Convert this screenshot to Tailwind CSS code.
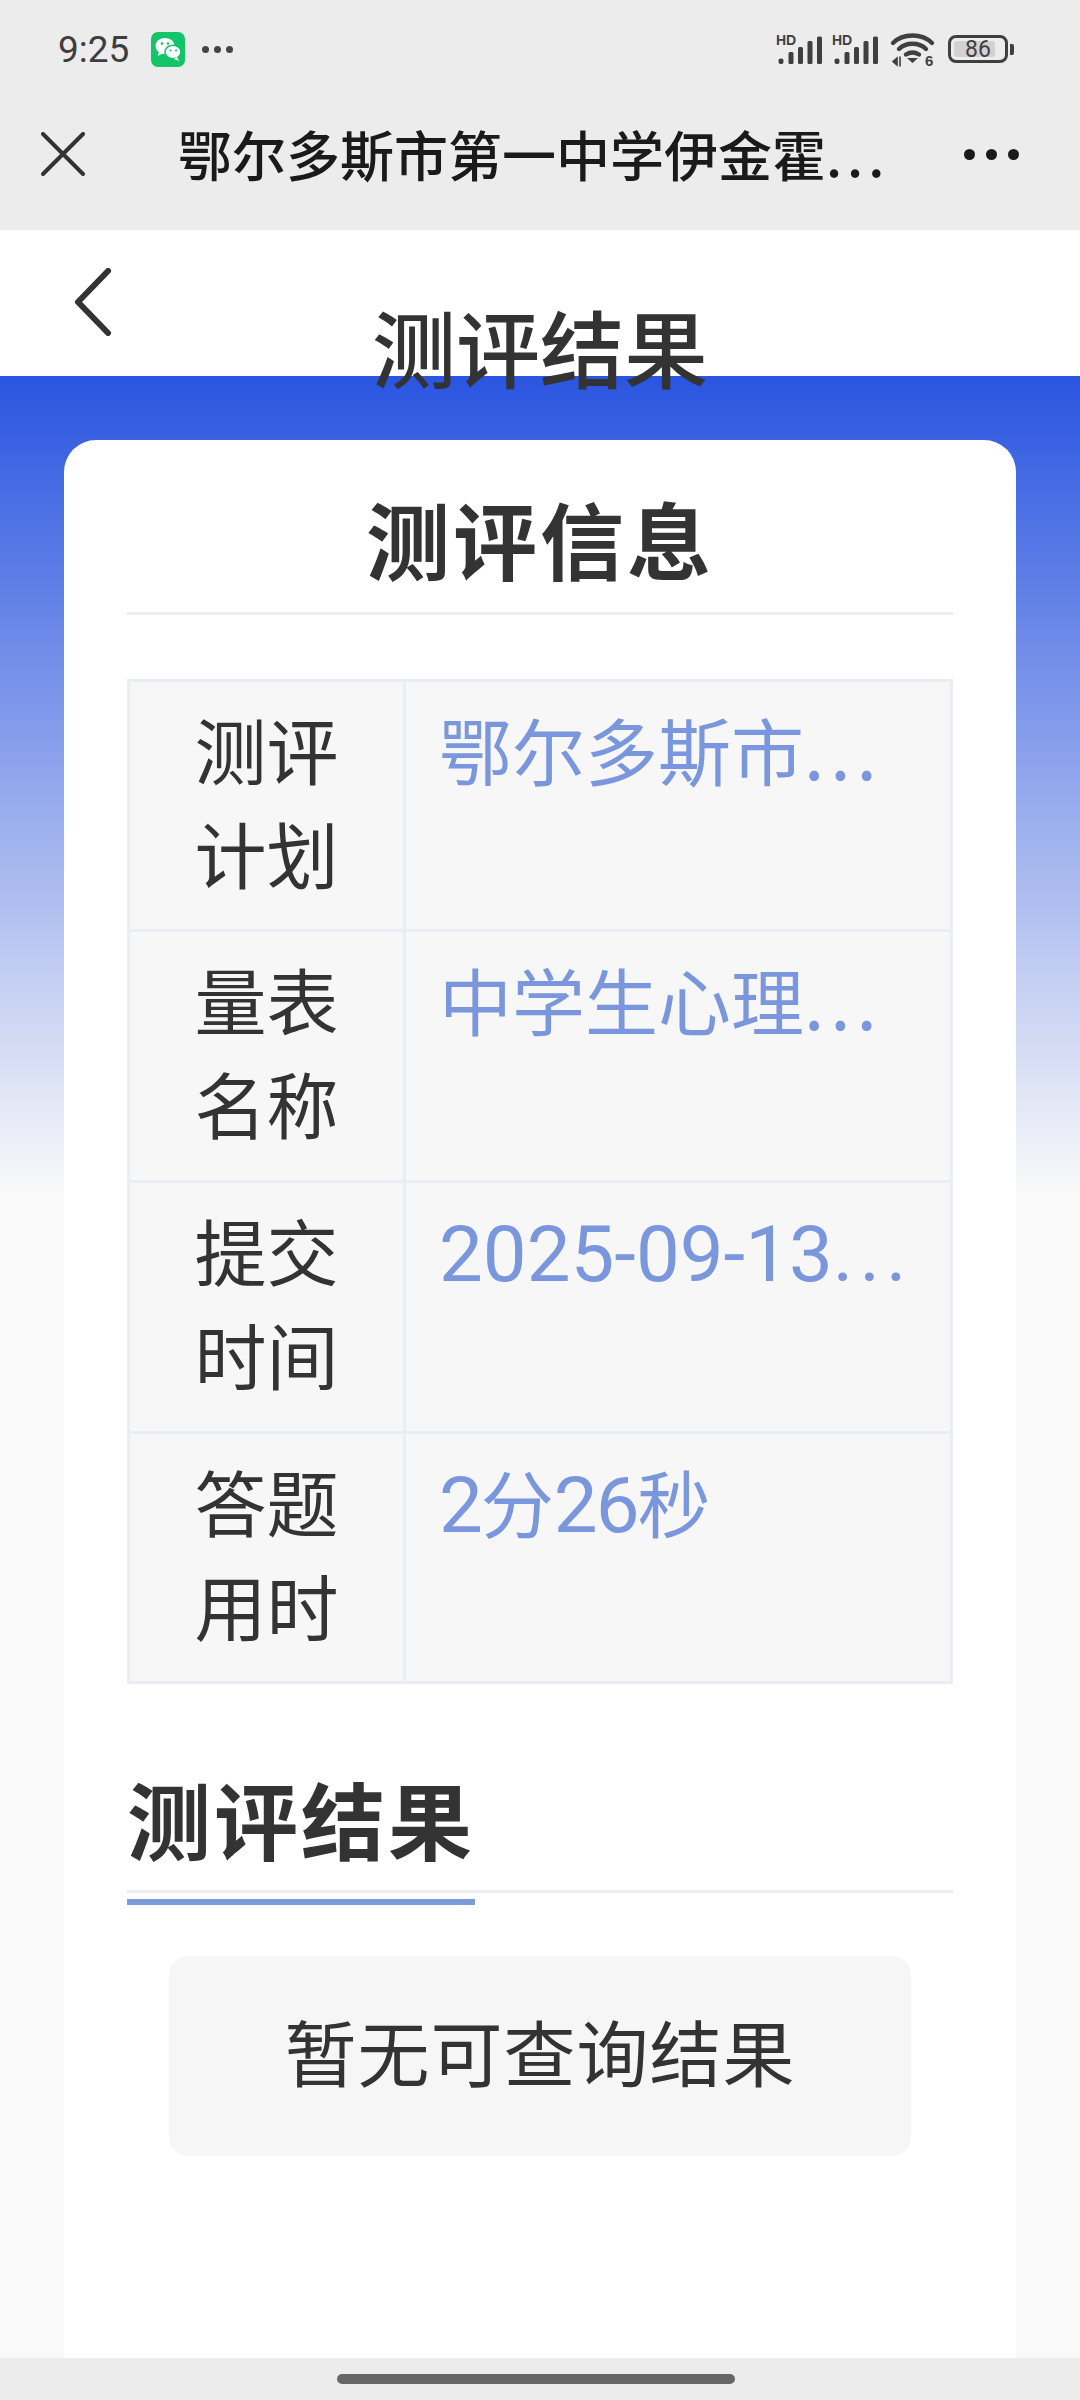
<!DOCTYPE html>
<html lang="zh-CN">
<head>
    <meta charset="UTF-8">
    <meta name="viewport" content="width=device-width, initial-scale=1.0">
    <title>测评结果</title>
    <script src="https://cdn.jsdelivr.net/npm/@tailwindcss/browser@4"></script>
</head>
<body class="w-[1080px] h-[2400px] overflow-hidden bg-[#f9f9f9] font-['Noto_Sans_CJK_SC','Noto_Sans',sans-serif]">
    <!-- status bar + webview nav -->
    <div class="h-[230px] bg-[#ececec]">
        <div class="h-[98px] pl-[58px] pr-[66px] flex items-center justify-between">
            <div class="flex items-center">
                <span class="font-['Roboto',sans-serif] text-[37px] leading-none text-[#3d3d3d] w-[93px]">9:25</span>
                <svg class="w-[34px] h-[35px]" viewBox="0 0 34 35">
                    <rect width="34" height="35" rx="7" fill="#13c468"/>
                    <ellipse cx="14" cy="14" rx="9.5" ry="8" fill="#fff"/>
                    <path d="M8 19l-1 5 5-3z" fill="#fff"/>
                    <ellipse cx="22" cy="20" rx="8" ry="6.8" fill="#fff" stroke="#13c468" stroke-width="1.5"/>
                    <path d="M26 25l2 4-5-2z" fill="#fff"/>
                    <circle cx="11" cy="11.5" r="1.3" fill="#13c468"/><circle cx="17" cy="11.5" r="1.3" fill="#13c468"/>
                    <circle cx="19.5" cy="18.5" r="1.1" fill="#13c468"/><circle cx="25" cy="18.5" r="1.1" fill="#13c468"/>
                </svg>
                <div class="ml-[17px] flex gap-[5px]">
                    <span class="w-[7px] h-[7px] rounded-full bg-[#444]"></span>
                    <span class="w-[7px] h-[7px] rounded-full bg-[#444]"></span>
                    <span class="w-[7px] h-[7px] rounded-full bg-[#444]"></span>
                </div>
            </div>
            <div class="flex items-center">
                <svg class="w-[46px] h-[30px] overflow-visible" viewBox="0 0 46 30" fill="#3f3f3f">
                    <text x="0" y="10.5" font-family="Liberation Sans" font-weight="700" font-size="14">HD</text>
                    <rect x="2.5" y="24.5" width="5" height="5.5" rx="2"/><rect x="12.5" y="18" width="5" height="12" rx="1.5"/><rect x="22" y="13" width="5" height="17" rx="1.5"/><rect x="31.5" y="7" width="5" height="23" rx="1.5"/><rect x="41" y="2.5" width="5" height="27.5" rx="1.5"/>
                </svg>
                <svg class="ml-[10px] w-[46px] h-[30px] overflow-visible" viewBox="0 0 46 30" fill="#3f3f3f">
                    <text x="0" y="10.5" font-family="Liberation Sans" font-weight="700" font-size="14">HD</text>
                    <rect x="2.5" y="24.5" width="5" height="5.5" rx="2"/><rect x="12.5" y="18" width="5" height="12" rx="1.5"/><rect x="22" y="13" width="5" height="17" rx="1.5"/><rect x="31.5" y="7" width="5" height="23" rx="1.5"/><rect x="41" y="2.5" width="5" height="27.5" rx="1.5"/>
                </svg>
                <svg class="ml-[13px] w-[43px] h-[33px] overflow-visible" viewBox="0 0 43 33" fill="none" stroke="#3f3f3f" stroke-width="4.4" stroke-linecap="round">
                    <path d="M2 10C12 0 31 0 41 10"/>
                    <path d="M8 16C15 9 28 9 35 16"/>
                    <path d="M15 21.5C19 19 24 19 28 21.5"/>
                    <path d="M16 25h11l-5.500 5z" fill="#3f3f3f" stroke="none"/>
                    <path d="M6 25l-4 3.500 4 3.500zM9 24v9" stroke-width="1.6" fill="#3f3f3f"/>
                    <text x="34" y="33" font-family="Liberation Sans" font-weight="700" font-size="15" fill="#3f3f3f" stroke="none">6</text>
                </svg>
                <div class="ml-[14px] w-[60px] h-[28px] rounded-[8px] border-[3px] border-[#3f3f3f] p-[3px] relative">
                    <div class="w-[41px] h-full bg-[#d2d2d2] rounded-[2px]"></div>
                    <span class="absolute inset-0 flex items-center justify-center font-['Roboto',sans-serif] text-[23px] leading-none text-[#3f3f3f]">86</span>
                </div>
                <span class="ml-[2px] w-[4px] h-[11px] rounded-r-[2px] bg-[#3f3f3f]"></span>
            </div>
        </div>
        <div class="h-[112px] flex items-center relative">
            <svg class="ml-[41px] w-[44px] h-[44px] shrink-0" viewBox="0 0 44 44" stroke="#333" stroke-width="4" stroke-linecap="round">
                <path d="M2 2l40 40M42 2L2 42"/>
            </svg>
            <div class="ml-[93px] text-[54px] leading-none font-medium text-[#1a1a1a] whitespace-nowrap">鄂尔多斯市第一中学伊金霍<span class="tracking-[5px]">...</span></div>
            <div class="absolute right-[61px] flex gap-[11px]">
                <span class="w-[11px] h-[11px] rounded-full bg-[#1a1a1a]"></span>
                <span class="w-[11px] h-[11px] rounded-full bg-[#1a1a1a]"></span>
                <span class="w-[11px] h-[11px] rounded-full bg-[#1a1a1a]"></span>
            </div>
        </div>
    </div>

    <!-- page header: the title hangs over the blue edge -->
    <div class="h-[146px] bg-white relative">
        <svg class="absolute left-[73px] top-[38px] w-[40px] h-[68px]" viewBox="0 0 40 68" fill="none" stroke="#333" stroke-width="6" stroke-linecap="round" stroke-linejoin="round">
            <path d="M35 3L5 34l30 31"/>
        </svg>
        <div class="absolute z-10 left-0 right-0 top-[73px] text-center text-[84px] leading-[86px] font-medium text-[#333]">测评结果</div>
    </div>

    <main class="h-[1982px] px-[64px] pt-[64px] bg-[linear-gradient(to_bottom,#2a55e0_0,#f9f9f9_814px)]">
        <div class="h-full bg-white rounded-t-[32px] px-[63px]">
            <h2 class="h-[175px] pt-[33px] border-b-[3px] border-[#eeeeee] text-center text-[84px] tracking-[3px] leading-[130px] font-bold text-[#333]">测评信息</h2>

            <div class="mt-[64px] border-[3px] border-[#e9edf4] bg-[#f7f7f7]">
                <div class="flex h-[250px] border-b-[3px] border-[#e9edf4]">
                    <div class="w-[276px] shrink-0 border-r-[3px] border-[#e9edf4] pt-[14px] text-center text-[72px] leading-[104px] text-[#333]">测评<br>计划</div>
                    <div class="pl-[33px] pt-[14px] text-[73px] leading-[104px] text-[#7a96dc] whitespace-nowrap">鄂尔多斯市<span class="tracking-[6px]">...</span></div>
                </div>
                <div class="flex h-[251px] border-b-[3px] border-[#e9edf4]">
                    <div class="w-[276px] shrink-0 border-r-[3px] border-[#e9edf4] pt-[14px] text-center text-[72px] leading-[104px] text-[#333]">量表<br>名称</div>
                    <div class="pl-[33px] pt-[14px] text-[73px] leading-[104px] text-[#7a96dc] whitespace-nowrap">中学生心理<span class="tracking-[6px]">...</span></div>
                </div>
                <div class="flex h-[251px] border-b-[3px] border-[#e9edf4]">
                    <div class="w-[276px] shrink-0 border-r-[3px] border-[#e9edf4] pt-[14px] text-center text-[72px] leading-[104px] text-[#333]">提交<br>时间</div>
                    <div class="pl-[33px] pt-[14px] text-[73px] leading-[104px] text-[#7a96dc] whitespace-nowrap"><span class="font-['Roboto'] text-[78px]">2025-09-13<span class="tracking-[6px]">...</span></span></div>
                </div>
                <div class="flex h-[247px]">
                    <div class="w-[276px] shrink-0 border-r-[3px] border-[#e9edf4] pt-[14px] text-center text-[72px] leading-[104px] text-[#333]">答题<br>用时</div>
                    <div class="pl-[33px] pt-[14px] text-[73px] leading-[104px] text-[#7a96dc] whitespace-nowrap"><span class="font-['Roboto'] text-[78px] tracking-[-2px]">2</span>分<span class="font-['Roboto'] text-[78px] tracking-[-2px]">26</span>秒</div>
                </div>
            </div>

            <div class="mt-[76px] h-[133px] border-b-[3px] border-[#eeeeee] relative">
                <h3 class="text-[84px] tracking-[3px] leading-[116px] font-bold text-[#333]">测评结果</h3>
                <span class="absolute left-0 top-[139px] w-[348px] h-[6px] bg-[#7a9ad8]"></span>
            </div>

            <div class="mt-[63px] mx-[42px] h-[200px] pb-[12px] rounded-[20px] bg-[#f6f6f6] flex items-center justify-center text-[72px] tracking-[1px] leading-none text-[#333]">暂无可查询结果</div>
        </div>
    </main>

    <div class="h-[42px] bg-[#ececec] flex items-center justify-center">
        <span class="mr-[8px] w-[398px] h-[10px] rounded-full bg-[#666]"></span>
    </div>
</body>
</html>
